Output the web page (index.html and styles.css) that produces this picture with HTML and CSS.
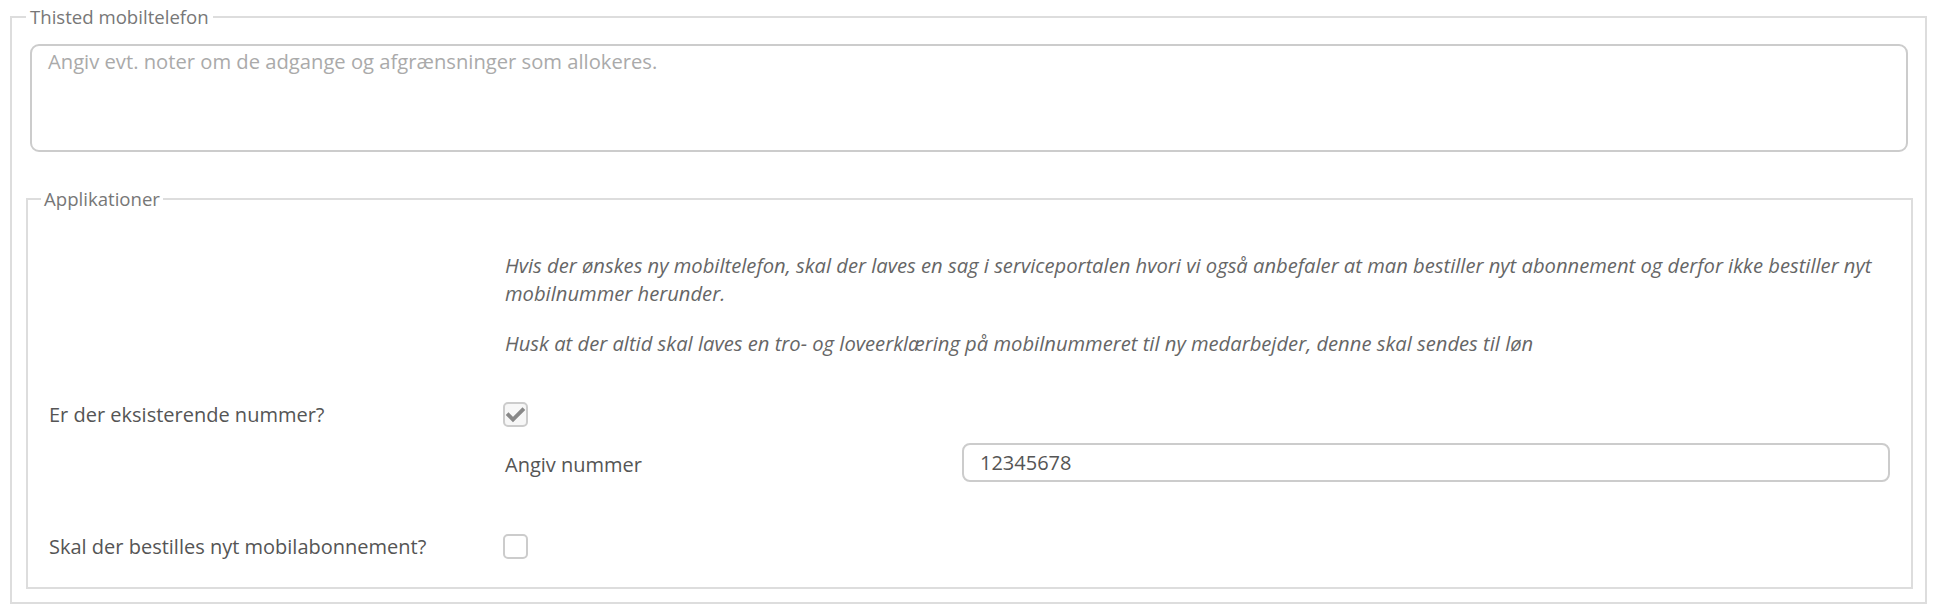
FILE: index.html
```html
<!DOCTYPE html>
<html lang="da">
<head>
<meta charset="utf-8">
<title>Thisted mobiltelefon</title>
<link rel="stylesheet" href="styles.css">
</head>
<body>
<fieldset class="group">
  <legend class="group-legend">Thisted mobiltelefon</legend>
  <textarea class="notes" placeholder="Angiv evt. noter om de adgange og afgrænsninger som allokeres."></textarea>

  <fieldset class="sub">
    <legend class="sub-legend">Applikationer</legend>

    <div class="row info">
      <div></div>
      <div class="notes-text">
        <p class="note">Hvis der ønskes ny mobiltelefon, skal der laves en sag i serviceportalen hvori vi også anbefaler at man bestiller nyt abonnement og derfor ikke bestiller nyt mobilnummer herunder.</p>
        <p class="note">Husk at der altid skal laves en tro- og loveerklæring på mobilnummeret til ny medarbejder, denne skal sendes til løn</p>
      </div>
    </div>

    <div class="row check-row first">
      <label class="label">Er der eksisterende nummer?</label>
      <span class="check checked">
        <svg viewBox="0 0 25 25" width="23" height="23"><path d="M2.5 11.5 L9.5 18.5 L22.5 5.5" fill="none" stroke="#888" stroke-width="4.6"/></svg>
      </span>
    </div>

    <div class="row sub-row">
      <div></div>
      <div class="nested">
        <label class="sublabel">Angiv nummer</label>
        <input class="text-input" type="text" value="12345678">
      </div>
    </div>

    <div class="row check-row last">
      <label class="label">Skal der bestilles nyt mobilabonnement?</label>
      <span class="check"></span>
    </div>
  </fieldset>
</fieldset>
</body>
</html>
```

FILE: styles.css
```css
html, body {
  margin: 0;
  padding: 0;
  background: #fff;
}

body {
  font-family: "Open Sans", Lato, sans-serif;
  font-size: 20px;
  color: #555;
}

.group {
  box-sizing: border-box;
  width: 1917px;
  margin: 5px 0 0 10px;
  padding: 0 12px 0 14px;
  border: 2px solid #ddd;
  min-width: 0;
}

.group-legend {
  padding: 0 4px;
  font-size: 18.6px;
  line-height: 24px;
  color: #777;
}

.notes {
  display: block;
  box-sizing: border-box;
  width: 1878px;
  height: 108px;
  margin: 15px 5px 0 4px;
  padding: 2px 16px;
  border: 2px solid #ccc;
  border-radius: 9px;
  font-family: "Open Sans", Lato, sans-serif;
  font-size: 20.2px;
  line-height: 26px;
  color: #555;
  resize: none;
  outline: none;
}

.notes::placeholder {
  color: #aaa;
}

.sub {
  box-sizing: border-box;
  margin: 35px 0 13px 0;
  padding: 0 22px 28px 13px;
  border: 2px solid #ddd;
  min-width: 0;
}

.sub-legend {
  padding: 0 3px;
  font-size: 18.6px;
  line-height: 24px;
  color: #777;
}

.row {
  display: grid;
  grid-template-columns: 456px 1fr;
  padding-left: 8px;
}

.info {
  margin-top: 40px;
}

.note {
  margin: 0;
  font-style: italic;
  font-size: 20.2px;
  line-height: 28px;
  color: #666;
}

.note + .note {
  margin-top: 22px;
}

.check-row {
  align-items: center;
  height: 25px;
}

.check-row.first {
  margin-top: 45px;
}

.check-row.last {
  margin-top: 52px;
}

.label {
  line-height: 25px;
  color: #555;
}

.check {
  box-sizing: border-box;
  width: 25px;
  height: 25px;
  margin-left: -2px;
  border: 2px solid #ccc;
  border-radius: 5px;
  background: #fff;
  display: flex;
  align-items: center;
  justify-content: center;
}

.check.checked {
  background: #f7f7f7;
}

.sub-row {
  margin-top: 16px;
}

.nested {
  display: grid;
  grid-template-columns: 457px 1fr;
  align-items: center;
}

.sublabel {
  line-height: 25px;
  color: #555;
  padding-top: 3px;
}

.text-input {
  box-sizing: border-box;
  width: 928px;
  height: 39px;
  padding: 0 16px;
  border: 2px solid #ccc;
  border-radius: 8px;
  font-family: "Open Sans", Lato, sans-serif;
  font-size: 20px;
  color: #555;
  outline: none;
}
```
